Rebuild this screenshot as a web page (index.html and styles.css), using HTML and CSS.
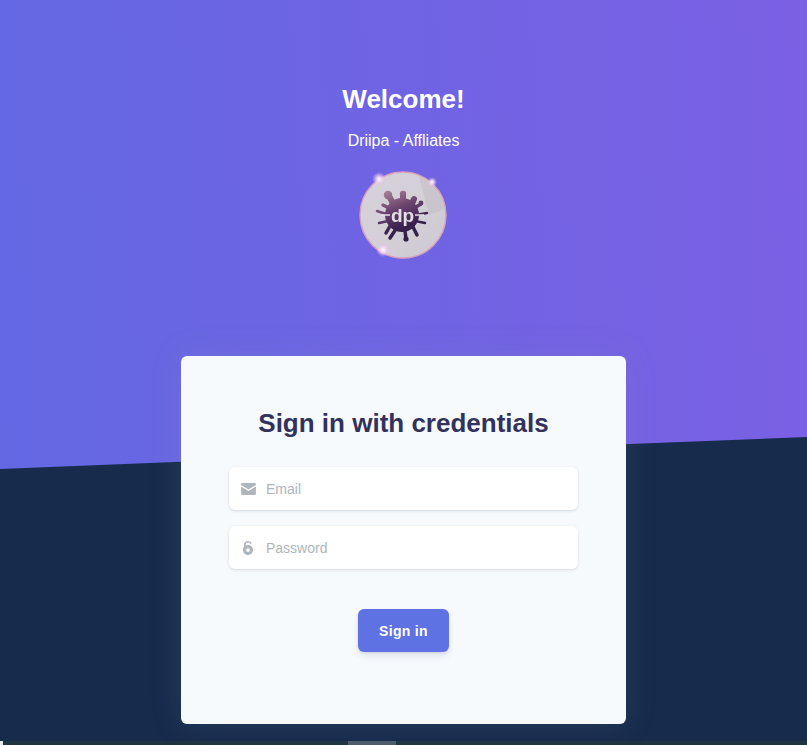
FILE: index.html
```html
<!DOCTYPE html>
<html lang="en">
<head>
<meta charset="utf-8">
<title>Driipa - Affliates</title>
<link rel="stylesheet" href="styles.css">
</head>
<body>
<div class="page">
  <header class="hero">
    <h1 class="hero-title">Welcome!</h1>
    <p class="hero-sub">Driipa - Affliates</p>
    <div class="logo">
      <svg class="logo-svg" viewBox="0 0 88 88" width="88" height="88" aria-hidden="true">
        <defs>
          <linearGradient id="disc" x1="0" y1="0" x2="1" y2="1">
            <stop offset="0" stop-color="#d6d0da"/>
            <stop offset="0.5" stop-color="#d5d0d8"/>
            <stop offset="1" stop-color="#cdc9d0"/>
          </linearGradient>
          <linearGradient id="ink" gradientUnits="userSpaceOnUse" x1="30" y1="18" x2="50" y2="70">
            <stop offset="0" stop-color="#a98199"/>
            <stop offset="0.35" stop-color="#6d4670"/>
            <stop offset="0.7" stop-color="#3b2450"/>
            <stop offset="1" stop-color="#2c2040"/>
          </linearGradient>
          <radialGradient id="glow">
            <stop offset="0" stop-color="#fff"/>
            <stop offset="0.4" stop-color="#f5d8f5" stop-opacity=".8"/>
            <stop offset="1" stop-color="#e6b4ea" stop-opacity="0"/>
          </radialGradient>
          <filter id="soft" x="-10%" y="-10%" width="120%" height="120%">
            <feGaussianBlur stdDeviation=".45"/>
          </filter>
        </defs>
        <circle cx="44" cy="44" r="43" fill="url(#disc)" stroke="#d9a0bc" stroke-width="1.4"/>
        <path class="logo-sheen" d="M60 5 A43 43 0 0 1 86 38 L70 44z"/>
        <g filter="url(#soft)">
          <g fill="url(#ink)" stroke="url(#ink)" stroke-linecap="round">
            <circle cx="43" cy="44" r="17" stroke="none"/>
            <path stroke-width="6" fill="none" d="M36 36 30 25M44 32 44 24M52 35 55 28"/>
            <path stroke-width="3.500" fill="none" d="M55 37 62 33M30 37 24 34M31 55 27 62M37 58 31 67M46 60 47 68M54 56 58 64"/>
            <path stroke-width="2.400" fill="none" d="M56 44 68 42M30 44 18 40M29 50 20 52M56 50 66 52"/>
            <circle cx="29" cy="24" r="4.200" stroke="none"/>
            <circle cx="44" cy="23" r="3.200" stroke="none"/>
            <circle cx="62" cy="32" r="2.400" stroke="none"/>
            <circle cx="47" cy="68" r="2.600" stroke="none"/>
          </g>
          <text class="logo-text" x="43.500" y="50.500" text-anchor="middle">dp</text>
          <path class="logo-dash" d="M22 44H31M56 44H65"/>
        </g>
        <circle cx="20" cy="8" r="7" fill="url(#glow)"/>
        <circle cx="73" cy="11" r="5" fill="url(#glow)"/>
        <circle cx="24" cy="79" r="7" fill="url(#glow)"/>
      </svg>
    </div>
  </header>

  <main class="card">
    <h2 class="card-title">Sign in with credentials</h2>
    <form class="form">
      <label class="field">
        <svg class="field-icon" viewBox="0 0 16 13" width="15" height="12" aria-hidden="true">
          <path d="M0 1.2C0 .5.5 0 1.2 0h13.6c.7 0 1.2.5 1.2 1.2v1L8 7 0 2.2z"/>
          <path d="M0 3.9V11.8c0 .7.5 1.2 1.2 1.2h13.6c.7 0 1.2-.5 1.2-1.2V3.9L8 8.7z"/>
        </svg>
        <input class="field-input" type="email" placeholder="Email">
      </label>
      <label class="field">
        <svg class="field-icon field-icon-lock" viewBox="0 0 10 14" width="10" height="14" aria-hidden="true">
          <path fill-rule="evenodd" d="M1 5.2V3.6C1 1.5 2.7 0 5 0c1.8 0 3.2.9 3.8 2.4L7.2 3C6.9 2.1 6.1 1.6 5 1.6 3.6 1.6 2.7 2.4 2.7 3.6V4.6C3.3 4.3 4.1 4.1 5 4.1c2.8 0 5 2.2 5 4.9S7.800 14 5 14 0 11.800 0 9c0-1.500.4-2.800 1-3.800zM5 7.200A1.900 1.900 0 1 0 5 11 1.900 1.900 0 0 0 5 7.200z"/>
        </svg>
        <input class="field-input" type="password" placeholder="Password">
      </label>
      <button class="submit" type="button">Sign in</button>
    </form>
  </main>

  <div class="strip">
    <span class="strip-corner"></span>
    <span class="strip-thumb"></span>
  </div>
</div>
</body>
</html>
```
FILE: styles.css
```css
* { box-sizing: border-box; }
html, body { margin: 0; height: 100%; }
body {
  background: #172b4d;
  font-family: "Liberation Sans", Arial, sans-serif;
  overflow: hidden;
}
.page {
  height: 745px;
  display: flex;
  flex-direction: column;
  align-items: center;
  overflow: hidden;
}
.hero {
  align-self: stretch;
  height: 469px;
  flex: none;
  padding-top: 83px;
  display: flex;
  flex-direction: column;
  align-items: center;
  color: #fff;
  background: linear-gradient(87deg, #6468e3 0, #7b60e4 100%);
  clip-path: polygon(0 0, 100% 0, 100% 437px, 0 100%);
}
.hero-title {
  margin: 0;
  font-size: 26px;
  line-height: 32px;
  font-weight: 700;
}
.hero-sub {
  margin: 16px 0 0;
  font-size: 16px;
  line-height: 20px;
}
.logo {
  margin: 20px 2px 0 0;
  width: 88px;
  height: 88px;
}
.logo-svg { display: block; overflow: visible; }
.logo-sheen { fill: #c6c1c9; opacity: .7; }
.logo-text {
  font-family: "Liberation Sans", Arial, sans-serif;
  font-size: 19px;
  font-weight: 700;
  fill: #e4dfe6;
}
.logo-dash {
  fill: none;
  stroke: #e6e0e8;
  stroke-width: 1.500;
}
.card {
  flex: none;
  width: 445px;
  height: 368px;
  margin-top: -113px;
  padding: 48px 48px 0;
  background: #f7fafc;
  border-radius: 6px;
  box-shadow: 0 0 32px rgba(136, 152, 170, .15);
  position: relative;
}
.card-title {
  margin: 0;
  text-align: center;
  color: #32325d;
  font-size: 26px;
  line-height: 38px;
  font-weight: 700;
}
.form {
  margin-top: 25px;
  display: flex;
  flex-direction: column;
  align-items: center;
  gap: 16px;
}
.field {
  width: 349px;
  height: 43px;
  padding-left: 12px;
  display: flex;
  align-items: center;
  background: #fff;
  border-radius: 6px;
  box-shadow: 0 1px 3px rgba(50, 50, 93, .15), 0 1px 0 rgba(0, 0, 0, .02);
}
.field-icon {
  flex: none;
  fill: #adb5bd;
  margin-right: 10px;
}
.field-icon-lock {
  margin-left: 2px;
  margin-right: 13px;
}
.field-input {
  flex: 1;
  min-width: 0;
  height: 100%;
  padding: 0;
  border: 0;
  outline: 0;
  background: transparent;
  font: 14px "Liberation Sans", Arial, sans-serif;
  color: #525f7f;
}
.field-input::placeholder { color: #adb5bd; opacity: 1; }
.submit {
  width: 91px;
  height: 43px;
  margin-top: 24px;
  border: 0;
  border-radius: 6px;
  background: #5e72e4;
  color: #fff;
  font: 700 14px "Liberation Sans", Arial, sans-serif;
  letter-spacing: .3px;
  box-shadow: 0 4px 6px rgba(50, 50, 93, .11), 0 1px 3px rgba(0, 0, 0, .08);
}
.strip {
  flex: none;
  align-self: stretch;
  height: 4px;
  margin-top: auto;
  background: #1f3640;
  display: flex;
}
.strip-corner { width: 3px; background: #e6e9ec; }
.strip-thumb { width: 48px; margin-left: 345px; background: #4d5d6b; }
```
